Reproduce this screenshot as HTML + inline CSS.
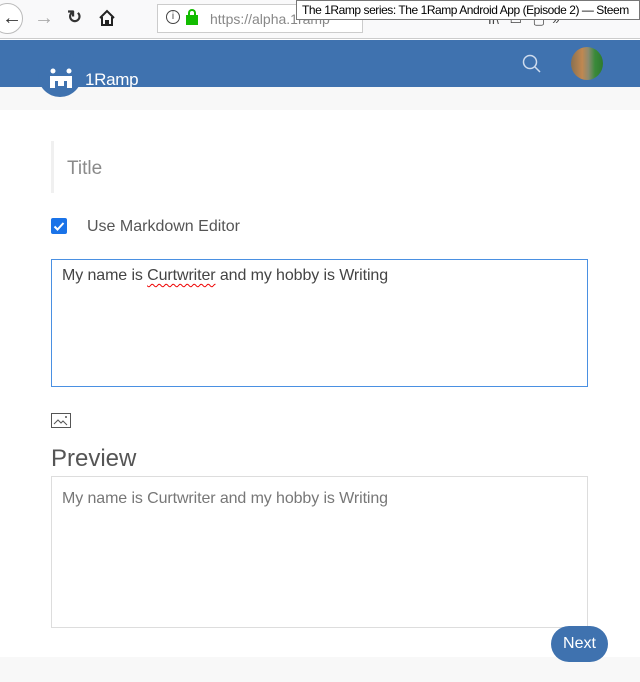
<!DOCTYPE html>
<html><head><meta charset="utf-8"><style>
*{margin:0;padding:0;box-sizing:border-box}
body{width:640px;height:682px;overflow:hidden;background:#fff;font-family:"Liberation Sans",sans-serif;position:relative}
.abs{position:absolute}
</style></head><body>
<div class="abs" style="left:0;top:0;width:640px;height:39px;background:#f9f9fa;border-bottom:1px solid #ccc"></div>
<div class="abs" style="left:-8px;top:3px;width:31px;height:31px;border:1px solid #bbb;border-radius:50%;background:#fff"></div>
<div class="abs" style="left:2px;top:7px;font-size:20px;color:#333">&#8592;</div>
<div class="abs" style="left:34px;top:7px;font-size:20px;color:#aaa">&#8594;</div>
<div class="abs" style="left:67px;top:7px;font-size:18px;color:#333;font-weight:bold">&#8635;</div>
<svg class="abs" style="left:98px;top:9px" width="18" height="18" viewBox="0 0 18 18"><path d="M2 9L9 2l7 7M4 8v8h4v-4h2v4h4V8" fill="none" stroke="#222" stroke-width="2"/></svg>
<div class="abs" style="left:157px;top:4px;width:206px;height:29px;border:1px solid #ccc;background:#fff"></div>
<div class="abs" style="left:166px;top:10px;width:14px;height:14px;border:1.5px solid #444;border-radius:50%;font-size:10px;text-align:center;line-height:11px;color:#444">i</div>
<div class="abs" style="left:186px;top:15px;width:12px;height:10px;background:#12bc00"></div>
<div class="abs" style="left:188px;top:9px;width:8px;height:8px;border:2px solid #12bc00;border-bottom:none;border-radius:4px 4px 0 0"></div>
<div class="abs" style="left:210px;top:11px;font-size:14px;color:#888">https://alpha.1ramp</div>
<div class="abs" style="left:488px;top:12px;font-size:13px;color:#444">II\ &nbsp; ▭ &nbsp; ▢ &nbsp;»</div>
<div class="abs" style="left:296px;top:0;width:344px;height:20px;background:#fff;border:1px solid #777;font-size:12px;line-height:18px;padding-left:5px;color:#000;white-space:nowrap;overflow:hidden;letter-spacing:-0.45px">The 1Ramp series: The 1Ramp Android App (Episode 2) — Steem</div>
<div class="abs" style="left:0;top:40px;width:640px;height:47px;background:#3f72af"></div>
<div class="abs" style="left:0;top:87px;width:640px;height:23px;background:#f8f8f8"></div>
<div class="abs" style="left:38px;top:53px;width:44px;height:44px;border-radius:50%;background:#3f72af"></div>
<svg class="abs" style="left:49px;top:68px" width="24" height="20" viewBox="0 0 24 20"><circle cx="4" cy="3" r="2.5" fill="#fff"/><circle cx="20" cy="3" r="2.5" fill="#fff"/><path d="M1 8h22v12h-5v-7h-3v5H9v-5H6v7H1z" fill="#fff"/></svg>
<div class="abs" style="left:85px;top:70px;font-size:17px;color:#fff;letter-spacing:-0.3px">1Ramp</div>
<svg class="abs" style="left:522px;top:54px" width="20" height="20" viewBox="0 0 20 20"><circle cx="8" cy="8" r="6.5" fill="none" stroke="#cfdcee" stroke-width="1.5"/><path d="M13 13l5 5" stroke="#cfdcee" stroke-width="1.5"/></svg>
<div class="abs" style="left:571px;top:47px;width:32px;height:33px;border-radius:50%;background:linear-gradient(90deg,#8a7050,#c08850 35%,#8a8a70 55%,#3a8a3a 75%,#2e7a2e)"></div>
<div class="abs" style="left:51px;top:141px;width:3px;height:52px;background:#f0f0f0"></div>
<div class="abs" style="left:67px;top:158px;font-size:19px;color:#8a8a8a">Title</div>
<div class="abs" style="left:51px;top:218px;width:16px;height:16px;background:#1a73e8;border-radius:2px"></div>
<svg class="abs" style="left:51px;top:218px" width="16" height="16"><path d="M3.5 8.5l3 3 6-6.5" fill="none" stroke="#fff" stroke-width="2"/></svg>
<div class="abs" style="left:87px;top:218px;font-size:16px;color:#555">Use Markdown Editor</div>
<div class="abs" style="left:51px;top:259px;width:537px;height:128px;border:1px solid #4a90e2"></div>
<div class="abs" style="left:62px;top:267px;font-size:16px;color:#444;letter-spacing:-0.1px">My name is <span style="text-decoration:underline wavy #e00;text-underline-offset:3px;text-decoration-thickness:1px">Curtwriter</span> and my hobby is Writing</div>
<svg class="abs" style="left:51px;top:413px" width="20" height="15" viewBox="0 0 20 15"><rect x="0.5" y="0.5" width="19" height="14" fill="none" stroke="#555"/><path d="M3 11l4-4 3 3 2-2 4 4" fill="none" stroke="#555"/><circle cx="15" cy="4" r="1" fill="#555"/></svg>
<div class="abs" style="left:51px;top:445px;font-size:24px;color:#555">Preview</div>
<div class="abs" style="left:51px;top:476px;width:537px;height:152px;border:1px solid #ddd"></div>
<div class="abs" style="left:62px;top:490px;font-size:16px;color:#777;letter-spacing:-0.1px">My name is Curtwriter and my hobby is Writing</div>
<div class="abs" style="left:0;top:657px;width:640px;height:25px;background:#f8f8f8"></div>
<div class="abs" style="left:551px;top:626px;width:57px;height:36px;border-radius:18px;background:#3f72af;color:#fff;font-size:16px;text-align:center;line-height:36px">Next</div>
</body></html>
